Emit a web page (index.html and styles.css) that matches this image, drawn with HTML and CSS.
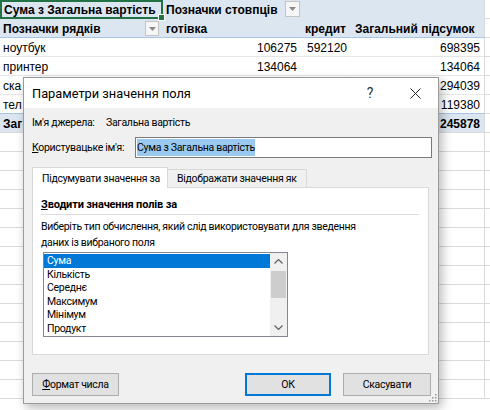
FILE: index.html
```
<!DOCTYPE html>
<html lang="uk">
<head>
<meta charset="utf-8">
<title>Параметри значення поля</title>
<link rel="stylesheet" href="styles.css">
</head>
<body>
<div class="sheet">
  <div class="c hd a1"><b>Сума з Загальна вартість</b><span class="handle"></span></div>
  <div class="c hd b1"><b>Позначки стовпців</b><span class="dd dd1"><svg width="7" height="4" viewBox="0 0 7 4"><path d="M0 0h7L3.5 4z" fill="#8a8a8a"/></svg></span></div>
  <div class="c hd"></div>
  <div class="c hd dr"></div>
  <div class="c"></div>

  <div class="c hd h2 a2"><b>Позначки рядків</b><span class="dd dd2"><svg width="7" height="4" viewBox="0 0 7 4"><path d="M0 0h7L3.5 4z" fill="#8a8a8a"/></svg></span></div>
  <div class="c hd h2"><b>готівка</b></div>
  <div class="c hd h2"><b>кредит</b></div>
  <div class="c hd h2 dr"><b>Загальний підсумок</b></div>
  <div class="c"></div>

  <div class="c pv">ноутбук</div>
  <div class="c pv num">106275</div>
  <div class="c pv num">592120</div>
  <div class="c pv num dr">698395</div>
  <div class="c"></div>

  <div class="c pv">принтер</div>
  <div class="c pv num">134064</div>
  <div class="c pv num"></div>
  <div class="c pv num dr">134064</div>
  <div class="c"></div>

  <div class="c pv">ска</div>
  <div class="c pv num"></div>
  <div class="c pv num"></div>
  <div class="c pv num dr">294039</div>
  <div class="c"></div>

  <div class="c pv">тел</div>
  <div class="c pv num"></div>
  <div class="c pv num"></div>
  <div class="c pv num dr">119380</div>
  <div class="c"></div>

  <div class="c tot"><b>Заг</b></div>
  <div class="c tot num"></div>
  <div class="c tot num"></div>
  <div class="c tot num dr"><b>245878</b></div>
  <div class="c"></div>

  <div class="c"></div><div class="c"></div><div class="c"></div><div class="c"></div><div class="c"></div>
  <div class="c"></div><div class="c"></div><div class="c"></div><div class="c"></div><div class="c"></div>
  <div class="c"></div><div class="c"></div><div class="c"></div><div class="c"></div><div class="c"></div>
  <div class="c"></div><div class="c"></div><div class="c"></div><div class="c"></div><div class="c"></div>
  <div class="c"></div><div class="c"></div><div class="c"></div><div class="c"></div><div class="c"></div>
  <div class="c"></div><div class="c"></div><div class="c"></div><div class="c"></div><div class="c"></div>
  <div class="c"></div><div class="c"></div><div class="c"></div><div class="c"></div><div class="c"></div>
  <div class="c"></div><div class="c"></div><div class="c"></div><div class="c"></div><div class="c"></div>
  <div class="c"></div><div class="c"></div><div class="c"></div><div class="c"></div><div class="c"></div>
  <div class="c"></div><div class="c"></div><div class="c"></div><div class="c"></div><div class="c"></div>
  <div class="c"></div><div class="c"></div><div class="c"></div><div class="c"></div><div class="c"></div>
  <div class="c"></div><div class="c"></div><div class="c"></div><div class="c"></div><div class="c"></div>
  <div class="c"></div><div class="c"></div><div class="c"></div><div class="c"></div><div class="c"></div>
  <div class="c"></div><div class="c"></div><div class="c"></div><div class="c"></div><div class="c"></div>
</div>

<div class="dialog">
  <div class="titlebar">
    <span class="title">Параметри значення поля</span>
    <span class="tbtn">?</span>
    <span class="tbtn close"><svg width="11" height="11" viewBox="0 0 11 11"><path d="M0.5 0.5l10 10M10.5 0.5l-10 10" stroke="#222" stroke-width="1"/></svg></span>
  </div>
  <div class="body">
    <div class="src"><span class="srclbl">Ім'я джерела:</span><span>Загальна вартість</span></div>
    <div class="custom">
      <span class="custlbl"><u>К</u>ористувацьке ім'я:</span>
      <div class="input"><span class="sel">Сума з Загальна вартість</span></div>
    </div>
    <div class="tabs">
      <div class="tab active">Підсумувати значення за</div>
      <div class="tab">Відображати значення як</div>
    </div>
    <div class="panel">
      <div class="sect"><u>З</u>водити значення полів за</div>
      <div class="desc">Виберіть тип обчислення, який слід використовувати для зведення<br>даних із вибраного поля</div>
      <div class="list">
        <div class="items">
          <div class="item selected">Сума</div>
          <div class="item">Кількість</div>
          <div class="item">Середнє</div>
          <div class="item">Максимум</div>
          <div class="item">Мінімум</div>
          <div class="item">Продукт</div>
        </div>
        <div class="scroll">
          <div class="arrow"><svg width="9" height="5" viewBox="0 0 9 5"><path d="M0.5 4.5l4-4 4 4" fill="none" stroke="#606060" stroke-width="1.2"/></svg></div>
          <div class="thumb"></div>
          <div class="track"></div>
          <div class="arrow"><svg width="9" height="5" viewBox="0 0 9 5"><path d="M0.5 0.5l4 4 4-4" fill="none" stroke="#606060" stroke-width="1.2"/></svg></div>
        </div>
      </div>
    </div>
    <div class="buttons">
      <button class="btn fmt"><u>Ф</u>ормат числа</button>
      <span class="spacer"></span>
      <button class="btn ok">ОК</button>
      <button class="btn cancel">Скасувати</button>
    </div>
  </div>
  <svg class="grip" width="8" height="8" viewBox="0 0 8 8">
    <rect x="6" y="0" width="1.5" height="1.5" fill="#9a9a9a"/>
    <rect x="3" y="3" width="1.5" height="1.5" fill="#9a9a9a"/>
    <rect x="6" y="3" width="1.5" height="1.5" fill="#9a9a9a"/>
    <rect x="0" y="6" width="1.5" height="1.5" fill="#9a9a9a"/>
    <rect x="3" y="6" width="1.5" height="1.5" fill="#9a9a9a"/>
    <rect x="6" y="6" width="1.5" height="1.5" fill="#9a9a9a"/>
  </svg>
</div>
</body>
</html>
```

FILE: styles.css
```
html, body {
  margin: 0;
  padding: 0;
  background: #fff;
  overflow: hidden;
}

body {
  width: 490px;
  height: 410px;
  position: relative;
  font-family: "Liberation Sans", Arial, sans-serif;
  font-size: 12px;
  color: #000;
}

.sheet {
  display: grid;
  grid-template-columns: 163px 139px 50px 133px 5px;
  grid-auto-rows: 19px;
  overflow: hidden;
  width: 490px;
}

.c {
  box-sizing: border-box;
  height: 19px;
  line-height: 17px;
  padding: 2px 3px 0 3px;
  border-right: 1px solid #dadada;
  border-bottom: 1px solid #dadada;
  white-space: nowrap;
  overflow: visible;
  position: relative;
}

.hd {
  background: #dce6f1;
  border-right-color: #dce6f1;
  border-bottom-color: #dce6f1;
}

.h2 {
  border-bottom-color: #a9c4e4;
}

.pv {
  background: #fff;
  border-right-color: #fff;
  border-bottom-color: #e6e6e6;
}

.tot {
  background: #dce6f1;
  border-right-color: #dce6f1;
  border-bottom-color: #dadada;
  border-top: 1px solid #a9c4e4;
  margin-top: -1px;
  height: 20px;
}

.dr {
  border-right-color: #dadada;
}

.num {
  text-align: right;
  padding-right: 4px;
}

.a1 {
  border: 2px solid #217346;
  padding: 0 2px;
  z-index: 2;
}

.handle {
  position: absolute;
  right: -4px;
  bottom: -4px;
  width: 5px;
  height: 5px;
  background: #217346;
  border: 1px solid #fff;
}

.b1 {
  z-index: 1;
}

.dd {
  position: absolute;
  box-sizing: border-box;
  border: 1px solid #c4c4c4;
  background: #f6f6f6;
  display: flex;
  align-items: center;
  justify-content: center;
}

.dd1 {
  left: 122px;
  top: 1px;
  width: 15px;
  height: 16px;
}

.dd2 {
  left: 145px;
  top: 2px;
  width: 14px;
  height: 15px;
}

/* dialog */
.dialog {
  position: absolute;
  left: 23px;
  top: 77px;
  width: 416px;
  height: 327px;
  box-sizing: border-box;
  border: 1px solid #9b9b9b;
  background: #f0f0f0;
  box-shadow: 3px 4px 10px rgba(0, 0, 0, 0.28);
  font-family: Roboto, "Noto Sans", sans-serif;
  font-size: 10.5px;
  letter-spacing: -0.3px;
  color: #000;
  white-space: nowrap;
  z-index: 5;
}

.titlebar {
  height: 30px;
  background: #fff;
  display: flex;
  align-items: center;
}

.title {
  flex: 1;
  padding-left: 8px;
  font-size: 12.8px;
  letter-spacing: 0;
}

.tbtn {
  width: 46px;
  height: 30px;
  display: flex;
  align-items: center;
  justify-content: center;
  font-size: 14px;
  color: #333;
}

.close {
  width: 45px;
}

.body {
  padding: 0 6px 0 8px;
}

.src {
  margin-top: 7px;
  height: 15px;
  line-height: 15px;
  display: flex;
}

.srclbl {
  width: 74px;
  flex-shrink: 0;
}

.custom {
  margin-top: 7px;
  display: flex;
  align-items: center;
  height: 21px;
}

.custlbl {
  width: 103px;
  flex-shrink: 0;
}

.input {
  flex: 1;
  height: 21px;
  box-sizing: border-box;
  border: 1px solid #7a7a7a;
  background: #fff;
  padding: 1px 1px;
  display: flex;
}

.sel {
  background: #99c9ef;
  line-height: 17px;
  height: 17px;
}

.tabs {
  margin-top: 9px;
  height: 20px;
  display: flex;
  align-items: flex-end;
}

.tab {
  box-sizing: border-box;
  height: 18px;
  line-height: 17px;
  padding: 0 9px;
  border: 1px solid #d9d9d9;
  border-bottom: none;
  border-left: none;
  background: #f0f0f0;
  width: 139px;
}

.tab.active {
  height: 21px;
  line-height: 21px;
  width: 136px;
  margin-bottom: -1px;
  border-left: 1px solid #d9d9d9;
  background: #fff;
  position: relative;
  z-index: 1;
}

.panel {
  box-sizing: border-box;
  width: 397px;
  height: 168px;
  border: 1px solid #d9d9d9;
  background: #fff;
  padding: 9px 8px 0 8px;
}

.sect {
  font-weight: bold;
  font-size: 11px;
  letter-spacing: -0.15px;
  line-height: 16px;
  padding-bottom: 1px;
  border-bottom: 1px solid #dcdcdc;
  width: 378px;
}

.desc {
  margin-top: 4px;
  line-height: 16px;
}

.list {
  margin: 1px 0 0 2px;
  width: 245px;
  height: 85px;
  box-sizing: border-box;
  border: 1px solid #828790;
  display: flex;
}

.items {
  flex: 1;
  padding-top: 1px;
}

.item {
  height: 13.5px;
  line-height: 13.5px;
  padding-left: 3px;
}

.item.selected {
  background: #0078d7;
  color: #fff;
}

.scroll {
  width: 17px;
  background: #f0f0f0;
  display: flex;
  flex-direction: column;
}

.arrow {
  height: 17px;
  display: flex;
  align-items: center;
  justify-content: center;
}

.thumb {
  margin: 1px 1px 0 1px;
  height: 27px;
  background: #cdcdcd;
}

.track {
  flex: 1;
}

.buttons {
  margin-top: 18px;
  display: flex;
  padding-right: 1px;
}

.spacer {
  flex: 1;
}

.btn {
  box-sizing: border-box;
  height: 23px;
  border: 1px solid #adadad;
  background: #e1e1e1;
  font-family: Roboto, "Noto Sans", sans-serif;
  font-size: 10.5px;
  letter-spacing: -0.3px;
  color: #000;
  padding: 0;
  margin: 0;
}

.fmt {
  width: 87px;
}

.ok {
  width: 86px;
  border: 1px solid #0078d7;
  box-shadow: inset 0 0 0 1px #0078d7;
}

.cancel {
  width: 88px;
  margin-left: 12px;
}

.grip {
  position: absolute;
  right: 1px;
  bottom: 1px;
}
```
